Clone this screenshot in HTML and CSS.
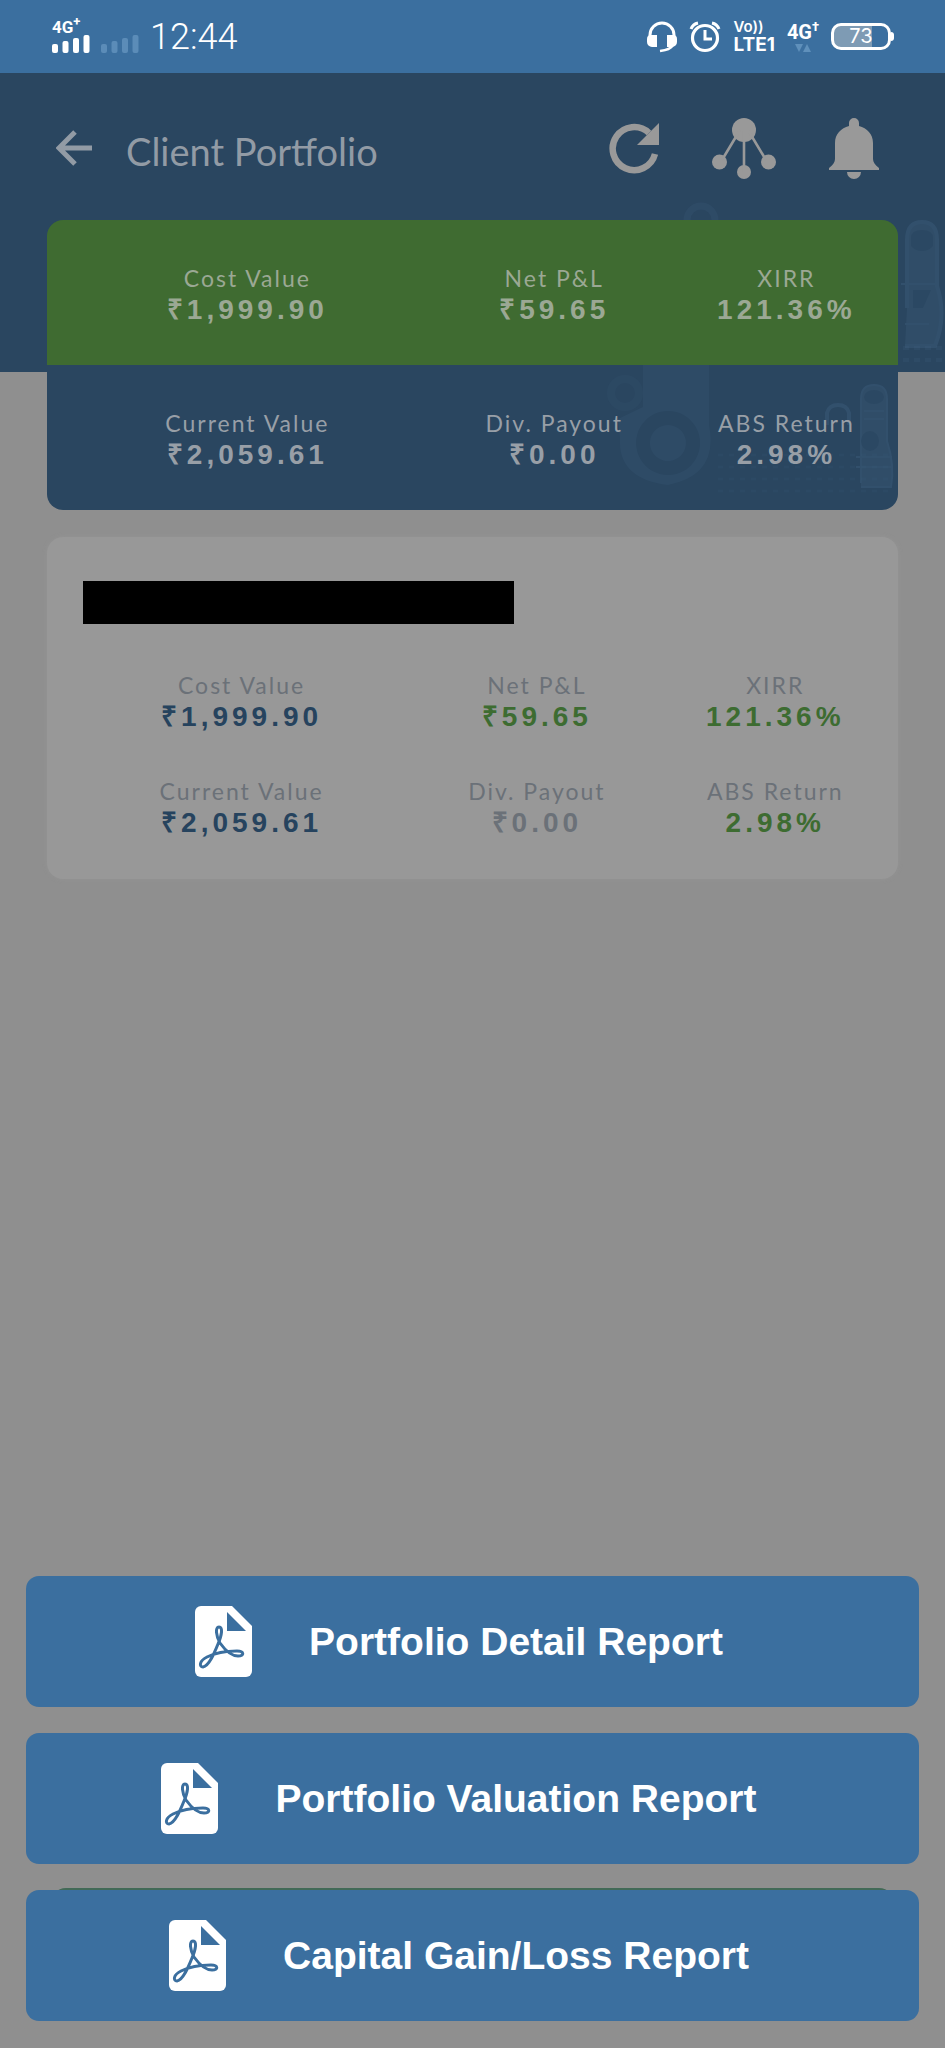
FILE: index.html
```html
<!DOCTYPE html>
<html lang="en">
<head>
<meta charset="utf-8">
<meta name="viewport" content="width=device-width, initial-scale=1">
<title>Client Portfolio</title>
<link rel="stylesheet" href="styles.css">
</head>
<body>
<svg class="defs" width="0" height="0" aria-hidden="true">
  <symbol id="pdf" viewBox="0 0 57 71">
    <path fill="#fff" d="M6 0H37L57 20V65a6 6 0 0 1-6 6H6a6 6 0 0 1-6-6V6A6 6 0 0 1 6 0Z"/>
    <path fill="#3b6f9f" d="M32 6V25H51Z"/>
    <path fill="none" stroke="#3b6f9f" stroke-width="3" stroke-linejoin="round" d="M24 21C20 21 21 30 25 37C30 44 37 50 43 50C50 50 49 45 42 45C31 45 20 47 12 51C4 55 4 61 8 61C14 60 19 48 23 38C27 29 28 21 24 21Z"/>
  </symbol>
</svg>

<div class="status">
  <div class="status-left">
    <div class="network">
      <span class="gen">4G<sup>+</sup></span>
      <svg width="38" height="18" viewBox="0 0 38 18" fill="#fff"><rect y="9" width="6" height="9" rx="2"/><rect x="10.500" y="6" width="6" height="12" rx="2"/><rect x="21" y="3" width="6" height="15" rx="2"/><rect x="31.500" width="6" height="18" rx="2"/></svg>
    </div>
    <svg class="signal-off" width="38" height="18" viewBox="0 0 38 18" fill="#5b8cb8"><rect y="9" width="6" height="9" rx="2"/><rect x="10.500" y="6" width="6" height="12" rx="2"/><rect x="21" y="3" width="6" height="15" rx="2"/><rect x="31.500" width="6" height="18" rx="2"/></svg>
    <time>12:44</time>
  </div>
  <div class="status-right">
    <svg width="30" height="32" viewBox="0 0 30 32" fill="none" stroke="#fff" stroke-width="3"><path d="M3 17V14a12 12 0 0 1 24 0V17"/><path stroke="none" fill="#fff" d="M4 14h6v12H5a5 5 0 0 1-5-5v-3a4 4 0 0 1 4-4ZM20 14h6a4 4 0 0 1 4 4v3a5 5 0 0 1-5 5h-5Z"/><path stroke-width="2.500" d="M26 24c-2 4-6 5-13 6"/></svg>
    <svg width="32" height="32" viewBox="0 0 32 32" fill="none" stroke="#fff" stroke-width="3.200"><circle cx="16" cy="17" r="12.500"/><path stroke-width="3" d="M16 9v9h7"/><path stroke-width="3" d="M2 8Q4 3 9 2M30 8Q28 3 23 2"/></svg>
    <div class="volte"><span>Vo))</span><b>LTE1</b></div>
    <div class="data"><span>4G<sup>†</sup></span><svg width="16" height="8" viewBox="0 0 16 8" fill="#5f90bb"><path d="M0 0h8L4 8ZM8 8h8L12 0Z"/></svg></div>
    <div class="battery"><span>73</span></div>
  </div>
</div>

<header class="hero">
  <svg class="hero-art" width="300" height="200" viewBox="0 0 300 200" fill="none" stroke="#3f6080" stroke-width="4" aria-hidden="true">
    <circle cx="56" cy="48" r="14" opacity=".2" stroke-width="7"/>
    <g opacity=".4"><path fill="#3a5975" d="M262 136V68q0-18 15-18t15 18v46q10 30-2 60h-30"/><path d="M266 66q0-8 11-8t11 8v8q-4 5-11 5t-11-5Z" fill="#2e4c68" stroke="none"/><path d="M256 112h34M260 152h24" stroke-width="2"/><path fill="#2e4c68" stroke="none" d="M268 118h18l-8 18h-10Z"/></g>
    <path d="M258 176h42M258 188h42" stroke-dasharray="6 5" opacity=".2"/>
  </svg>
  <nav class="toolbar">
    <button class="icon-button" type="button" aria-label="Back"><svg width="36" height="36" viewBox="0 0 36 36" fill="none" stroke="#929ba5" stroke-width="5"><path d="M19 2 3 18l16 16M4 18h32"/></svg></button>
    <h1>Client Portfolio</h1>
    <button class="icon-button" type="button" aria-label="Refresh"><svg width="50" height="52" viewBox="0 0 50 52"><path fill="none" stroke="#999" stroke-width="6.500" d="M46 32A21.500 21.500 0 1 1 40 11"/><path fill="#999" d="M50 1v22H28Z"/></svg></button>
    <button class="icon-button" type="button" aria-label="Network"><svg width="64" height="61" viewBox="0 0 64 61" fill="#999"><circle cx="32" cy="12" r="12"/><circle cx="7.500" cy="44" r="7.500"/><circle cx="32" cy="54" r="7"/><circle cx="56.500" cy="44" r="7.500"/><path stroke="#999" stroke-width="2.600" d="M32 12v42M28 12 10 42M36 12l18 30"/></svg></button>
    <button class="icon-button" type="button" aria-label="Notifications"><svg width="50" height="61" viewBox="0 0 50 61" fill="#999"><path d="M20 8V5a5 5 0 0 1 10 0v3c8 2 14 8 14 17v16c0 3 2 6 6 9v2H0v-2c4-3 6-6 6-9V25c0-9 6-15 14-17ZM18 54h14a7 7 0 0 1-14 0Z"/></svg></button>
  </nav>
</header>

<main>
  <section class="summary">
    <dl class="metrics gain">
      <div><dt>Cost Value</dt><dd>₹1,999.90</dd></div>
      <div><dt>Net P&amp;L</dt><dd>₹59.65</dd></div>
      <div><dt>XIRR</dt><dd>121.36%</dd></div>
    </dl>
    <dl class="metrics current">
      <div><dt>Current Value</dt><dd>₹2,059.61</dd></div>
      <div><dt>Div. Payout</dt><dd>₹0.00</dd></div>
      <div><dt>ABS Return</dt><dd>2.98%</dd></div>
    </dl>
    <svg class="summary-art" width="300" height="145" viewBox="0 0 300 145" fill="none" stroke="#3f6080" stroke-width="4" aria-hidden="true">
      <g opacity=".2"><path fill="#3f6080" stroke="none" fill-rule="evenodd" d="M45 0h66v60q10 50-41 60-50-6-48-46l-2-20 25-12ZM70 46a32 32 0 1 0 .1 0ZM70 60a18 18 0 1 1-.1 0Z"/><circle cx="27" cy="28" r="14" stroke-width="8" opacity=".6"/></g>
      <g opacity=".4"><path fill="#3a5975" stroke-width="2" d="M263 118V34q0-14 13-14t13 14v42q8 24 4 46h-30"/><ellipse cx="276" cy="32" rx="10" ry="7" fill="#2e4c68" stroke="none"/><ellipse cx="272" cy="76" rx="9" ry="10" fill="#2e4c68" stroke="none"/><path d="M229 60V48q2-8 11-8t11 8v12"/><path d="M266 46h20M266 54h20M258 92h36M258 102h36" stroke-width="2"/></g>
      <path d="M120 90h170M120 102h170M120 114h170M120 126h170" stroke-dasharray="5 6" stroke-width="3" opacity=".15"/>
    </svg>
  </section>

  <section class="client">
    <div class="redacted"></div>
    <dl class="metrics">
      <div><dt>Cost Value</dt><dd class="blue">₹1,999.90</dd></div>
      <div><dt>Net P&amp;L</dt><dd class="green">₹59.65</dd></div>
      <div><dt>XIRR</dt><dd class="green">121.36%</dd></div>
      <div><dt>Current Value</dt><dd class="blue">₹2,059.61</dd></div>
      <div><dt>Div. Payout</dt><dd>₹0.00</dd></div>
      <div><dt>ABS Return</dt><dd class="green">2.98%</dd></div>
    </dl>
  </section>
</main>

<div class="reports">
  <button class="report" type="button"><svg width="57" height="71"><use href="#pdf"/></svg><span>Portfolio Detail Report</span></button>
  <button class="report" type="button"><svg width="57" height="71"><use href="#pdf"/></svg><span>Portfolio Valuation Report</span></button>
  <button class="report covering" type="button"><svg width="57" height="71"><use href="#pdf"/></svg><span>Capital Gain/Loss Report</span></button>
</div>
</body>
</html>
```
FILE: styles.css
```css
* { box-sizing: border-box; }

body {
  margin: 0;
  min-height: 100vh;
  display: flex;
  flex-direction: column;
  background: #8f8f8f;
  font-family: "Liberation Sans", Arial, sans-serif;
}

button {
  margin: 0;
  padding: 0;
  border: 0;
  background: none;
  font: inherit;
  cursor: pointer;
}

svg { display: block; flex: none; }
.defs { position: absolute; }

.status {
  display: flex;
  justify-content: space-between;
  height: 73px;
  padding: 0 54px 0 52px;
  background: #3b6f9f;
  color: #fff;
}

.status-left, .status-right { display: flex; align-items: center; }
.status-left { gap: 11px; }
.status-right { gap: 12px; }

.network { display: grid; }
.gen { font: bold 17px/15px Roboto, sans-serif; }
.gen sup, .data sup { font-size: 13px; line-height: 0; }
.signal-off { margin-top: 14px; }
.status time { font: 300 36px/40px Roboto, sans-serif; }

.volte { display: grid; }
.volte span { font: 600 15px/16px Inter, sans-serif; }
.volte b { font: bold 19px/20px Inter, sans-serif; }
.data { display: grid; justify-items: center; gap: 2px; font: bold 20px/20px Roboto, sans-serif; }

.battery {
  position: relative;
  width: 60px;
  height: 27px;
  border: 3px solid #fff;
  border-radius: 10px;
  background: linear-gradient(90deg, #7e9bb4 70%, transparent 70%);
  font: 20px/21px Inter, sans-serif;
  text-align: center;
}
.battery::after {
  content: "";
  position: absolute;
  top: 6px;
  right: -6px;
  width: 3px;
  height: 9px;
  border-radius: 0 3px 3px 0;
  background: #fff;
}

.hero {
  position: relative;
  height: 299px;
  background: #2a4660;
}
.hero-art { position: absolute; right: 0; bottom: 0; }

.toolbar {
  position: relative;
  display: flex;
  align-items: center;
  height: 147px;
  padding: 3px 66px 0 56px;
}
.toolbar h1 {
  flex: 1;
  margin: 6px 0 0 34px;
  color: #929ba5;
  font: 400 38px/48px Lato, sans-serif;
}
.toolbar .icon-button + .icon-button { margin-left: 53px; }

main { padding: 0 47px; }

.summary {
  position: relative;
  margin-top: -152px;
  border-radius: 16px;
  overflow: hidden;
  background: #2a4660;
}
.summary-art { position: absolute; right: 0; bottom: 0; }

.metrics {
  position: relative;
  z-index: 1;
  display: grid;
  grid-template-columns: 374fr 242fr 224fr;
  margin: 0;
  padding: 44px 0 37px 14px;
  text-align: center;
  color: #989fa7;
}
.gain { background: #3f6b31; color: #9ba894; }
.metrics dt {
  font: 400 23px/28px Lato, sans-serif;
  letter-spacing: 2px;
}
.metrics dd {
  margin: 0;
  font-size: 28px;
  font-weight: bold;
  line-height: 36px;
  letter-spacing: 4px;
}

.client {
  margin-top: 27px;
  padding: 44px 0 38px;
  border-radius: 16px;
  background: #989898;
  box-shadow: 0 0 4px #949494;
}
.redacted {
  width: 431px;
  height: 43px;
  margin-left: 36px;
  background: #000;
}
.client .metrics {
  grid-template-columns: 360fr 232fr 246fr;
  row-gap: 42px;
  padding: 47px 0 0 15px;
  color: #6b7178;
}
.client .blue { color: #26435e; }
.client .green { color: #3d6c31; }

.reports {
  display: grid;
  gap: 26px;
  margin-top: auto;
  padding: 26px 26px 27px;
}
.report {
  display: flex;
  align-items: center;
  justify-content: center;
  gap: 57px;
  min-height: 131px;
  padding-right: 27px;
  border-radius: 13px;
  background: #3b6f9f;
  color: #fff;
  font-size: 39px;
  font-weight: bold;
  line-height: 44px;
}
.covering { position: relative; }
.covering::before {
  content: "";
  position: absolute;
  z-index: -1;
  top: -2px;
  left: 24px;
  right: 24px;
  height: 40px;
  border-radius: 16px;
  background: #426a57;
}
```
